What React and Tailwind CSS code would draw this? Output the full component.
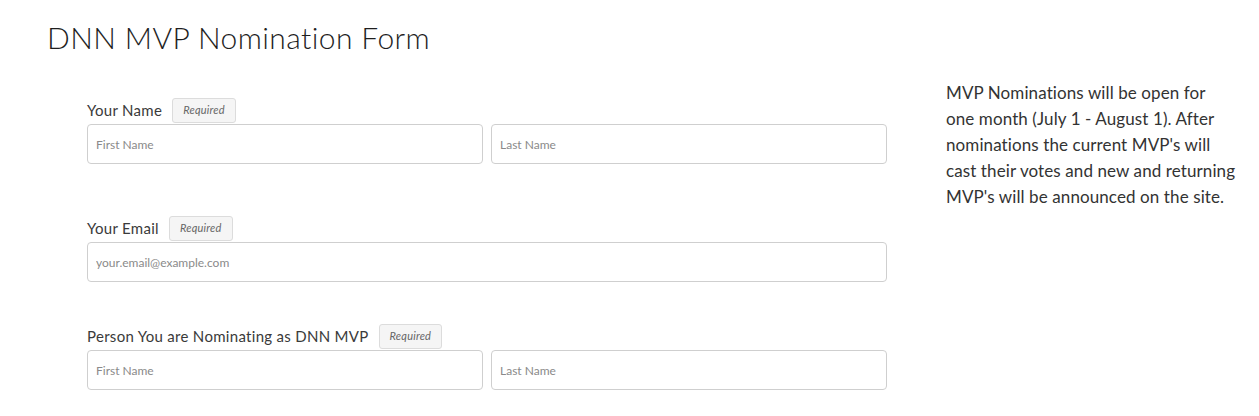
const FONT = { fontFamily: 'Lato, "Open Sans", sans-serif' };

const NOTE_LINES = [
  'MVP Nominations will be open for',
  'one month (July 1 - August 1). After',
  "nominations the current MVP's will",
  'cast their votes and new and returning',
  "MVP's will be announced on the site.",
];

function Badge() {
  return (
    <span className="inline-flex h-[25px] items-center rounded-[3px] border border-[#dcdcdc] bg-[#f5f5f5] px-[10px] text-[11px] italic tracking-[0.2px] text-[#666]">
      Required
    </span>
  );
}

function Field({ placeholder }) {
  return (
    <input
      type="text"
      placeholder={placeholder}
      className="h-[40px] w-full rounded-[4px] border border-[#cfcfcf] bg-white px-[8px] text-[12px] text-[#333] placeholder:text-[#8a8a8a] focus:outline-none"
    />
  );
}

function Section({ label, className = '', children }) {
  return (
    <div className={`flex flex-col gap-[1px] ${className}`}>
      <div className="flex h-[25px] items-center gap-[10px]">
        <span className="text-[15px] tracking-[0.3px] text-[#3a3a3a]">{label}</span>
        <Badge />
      </div>
      {children}
    </div>
  );
}

export default function App() {
  return (
    <div className="flex min-h-screen bg-white" style={FONT}>
      <div className="flex-none pl-[47px]">
        <h1 className="mt-[19px] text-[30px] font-light leading-[36px] tracking-[0.4px] text-[#1e1e1e]">DNN MVP Nomination Form</h1>
        <form className="mt-[43px] ml-[40px] flex w-[800px] flex-col">
          <Section label="Your Name">
            <div className="grid grid-cols-2 gap-[8px]">
              <Field placeholder="First Name" />
              <Field placeholder="Last Name" />
            </div>
          </Section>
          <Section label="Your Email" className="mt-[52px]">
            <Field placeholder="your.email@example.com" />
          </Section>
          <Section label="Person You are Nominating as DNN MVP" className="mt-[42px]">
            <div className="grid grid-cols-2 gap-[8px]">
              <Field placeholder="First Name" />
              <Field placeholder="Last Name" />
            </div>
          </Section>
        </form>
      </div>
      <aside className="ml-[59px] mt-[80px] w-[290px] text-[17px] leading-[26px] tracking-[0.1px] text-[#333]">
        {NOTE_LINES.map((line) => (
          <p key={line} className="whitespace-nowrap">{line}</p>
        ))}
      </aside>
    </div>
  );
}
